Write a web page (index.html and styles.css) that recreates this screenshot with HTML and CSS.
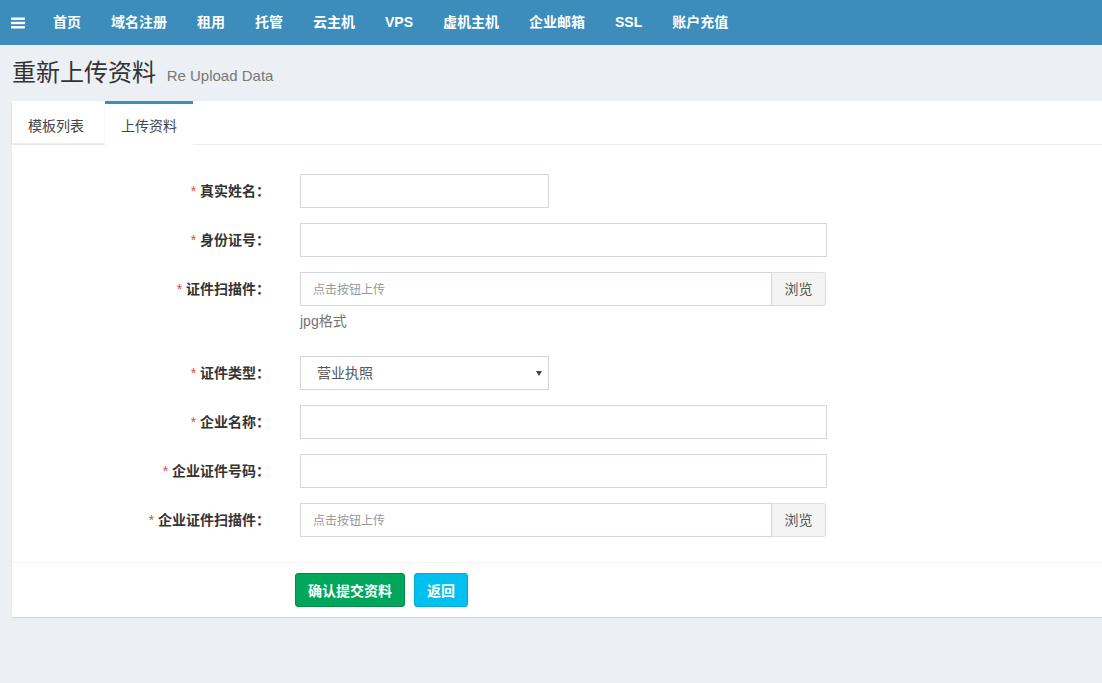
FILE: index.html
```html
<!DOCTYPE html>
<html lang="zh-CN">
<head>
<meta charset="utf-8">
<title>重新上传资料</title>
<link rel="stylesheet" href="styles.css">
</head>
<body>
<header class="topbar">
  <a class="toggle" href="#" aria-label="menu">
    <svg width="14" height="12" viewBox="0 0 14 12"><rect x="0" y="0.5" width="14" height="2.4" fill="#fff"/><rect x="0" y="4.8" width="14" height="2.4" fill="#fff"/><rect x="0" y="9.1" width="14" height="2.4" fill="#fff"/></svg>
  </a>
  <nav class="menu">
    <a href="#">首页</a>
    <a href="#">域名注册</a>
    <a href="#">租用</a>
    <a href="#">托管</a>
    <a href="#">云主机</a>
    <a href="#">VPS</a>
    <a href="#">虚机主机</a>
    <a href="#">企业邮箱</a>
    <a href="#">SSL</a>
    <a href="#">账户充值</a>
  </nav>
</header>

<section class="content-header">
  <h1>重新上传资料 <small>Re Upload Data</small></h1>
</section>

<section class="panel">
  <ul class="tabs">
    <li class="tab"><a href="#">模板列表</a></li>
    <li class="tab active"><a href="#">上传资料</a></li>
  </ul>
  <form class="form">
    <div class="row">
      <label class="lbl"><span class="req">*</span> 真实姓名：</label>
      <div class="field"><input class="input short" type="text"></div>
    </div>
    <div class="row">
      <label class="lbl"><span class="req">*</span> 身份证号：</label>
      <div class="field"><input class="input long" type="text"></div>
    </div>
    <div class="row">
      <label class="lbl"><span class="req">*</span> 证件扫描件：</label>
      <div class="field">
        <div class="file-group">
          <input class="input file" type="text" placeholder="点击按钮上传">
          <span class="browse">浏览</span>
        </div>
        <p class="help">jpg格式</p>
      </div>
    </div>
    <div class="row">
      <label class="lbl"><span class="req">*</span> 证件类型：</label>
      <div class="field">
        <div class="select-wrap">
          <select class="input short select">
            <option>营业执照</option>
          </select>
          <span class="caret"></span>
        </div>
      </div>
    </div>
    <div class="row">
      <label class="lbl"><span class="req">*</span> 企业名称：</label>
      <div class="field"><input class="input long" type="text"></div>
    </div>
    <div class="row">
      <label class="lbl"><span class="req">*</span> 企业证件号码：</label>
      <div class="field"><input class="input long" type="text"></div>
    </div>
    <div class="row">
      <label class="lbl"><span class="req">*</span> 企业证件扫描件：</label>
      <div class="field">
        <div class="file-group">
          <input class="input file" type="text" placeholder="点击按钮上传">
          <span class="browse">浏览</span>
        </div>
      </div>
    </div>
  </form>
  <div class="footer">
    <button class="btn btn-success" type="button">确认提交资料</button>
    <button class="btn btn-info" type="button">返回</button>
  </div>
</section>
</body>
</html>
```
FILE: styles.css
```css
* { box-sizing: border-box; }
html, body { margin: 0; padding: 0; }
body {
  background: #ecf0f5;
  font-family: "Liberation Sans", "Noto Sans CJK SC", sans-serif;
  font-size: 14px;
  color: #333;
  min-height: 683px;
  overflow: hidden;
}
a { text-decoration: none; }

.topbar {
  height: 45px;
  background: #3c8dbc;
  display: flex;
  align-items: center;
}
.toggle {
  display: flex;
  align-items: center;
  padding: 0 13px 0 11px;
  height: 45px;
}
.menu { display: flex; }
.menu a {
  color: #fff;
  font-weight: bold;
  font-size: 14px;
  line-height: 45px;
  padding: 0 15px;
}

.content-header { padding: 12px 12px 0; }
.content-header h1 {
  margin: 0;
  height: 44px;
  font-size: 24px;
  line-height: 32px;
  font-weight: normal;
  color: #333;
}
.content-header small {
  font-size: 15px;
  color: #777;
  padding-left: 4px;
}

.panel {
  margin-left: 12px;
  width: 1110px;
  background: #fff;
  box-shadow: 0 1px 1px rgba(0,0,0,0.1);
}
.tabs {
  list-style: none;
  margin: 0;
  padding: 0;
  display: flex;
  border-bottom: 1px solid #eeeeee;
  height: 44px;
}
.tab {
  margin-right: 1px;
  border-top: 3px solid transparent;
  box-shadow: 0 1px 2px rgba(0,0,0,0.1);
  height: 42px;
}
.tab a {
  display: block;
  padding: 12px 20px 7px 16px;
  line-height: 20px;
  color: #444;
  font-size: 14px;
}
.tab.active {
  border-top-color: #3c8dbc;
  box-shadow: none;
  background: #fff;
  height: 44px;
}
.tab.active a { padding: 12px 16px 7px 16px; }

.form { padding: 29px 0 25px; }
.row {
  display: grid;
  grid-template-columns: 258px 1fr;
  column-gap: 30px;
  margin-bottom: 15px;
}
.row:last-child { margin-bottom: 0; }
.lbl {
  text-align: right;
  font-weight: bold;
  font-size: 14px;
  line-height: 34px;
  color: #333;
}
.req { color: #dd4b39; font-weight: normal; }
.field { display: flex; flex-direction: column; }

.input {
  height: 34px;
  border: 1px solid #d2d6de;
  border-radius: 0;
  padding: 6px 12px;
  font-family: inherit;
  font-size: 14px;
  color: #555;
  background: #fff;
  outline: none;
}
.input::placeholder { color: #999; font-size: 12px; }
.short { width: 249px; }
.long { width: 527px; }

.file-group { display: flex; width: 526px; }
.file { flex: 1; min-width: 0; }
.browse {
  width: 54px;
  height: 34px;
  line-height: 32px;
  text-align: center;
  background: #f4f4f4;
  border: 1px solid #ddd;
  border-left: none;
  border-radius: 0 3px 3px 0;
  color: #555;
  font-size: 14px;
}
.help {
  margin: 5px 0 10px;
  line-height: 20px;
  font-size: 14px;
  color: #737373;
}

.select-wrap { position: relative; width: 249px; }
.select {
  appearance: none;
  -webkit-appearance: none;
  padding-left: 16px;
}
.caret {
  position: absolute;
  right: 7px;
  top: 15px;
  width: 0;
  height: 0;
  border-left: 3px solid transparent;
  border-right: 3px solid transparent;
  border-top: 5px solid #444;
}

.footer {
  border-top: 1px solid #f4f4f4;
  padding: 10px 0 10px 283px;
  display: flex;
  gap: 9px;
}
.btn {
  height: 34px;
  border-radius: 3px;
  font-family: inherit;
  font-size: 14px;
  font-weight: bold;
  color: #fff;
  padding: 0;
  cursor: pointer;
}
.btn-success { background: #00a65a; border: 1px solid #008d4c; width: 110px; }
.btn-info { background: #00c0ef; border: 1px solid #00acd6; width: 54px; }
```
